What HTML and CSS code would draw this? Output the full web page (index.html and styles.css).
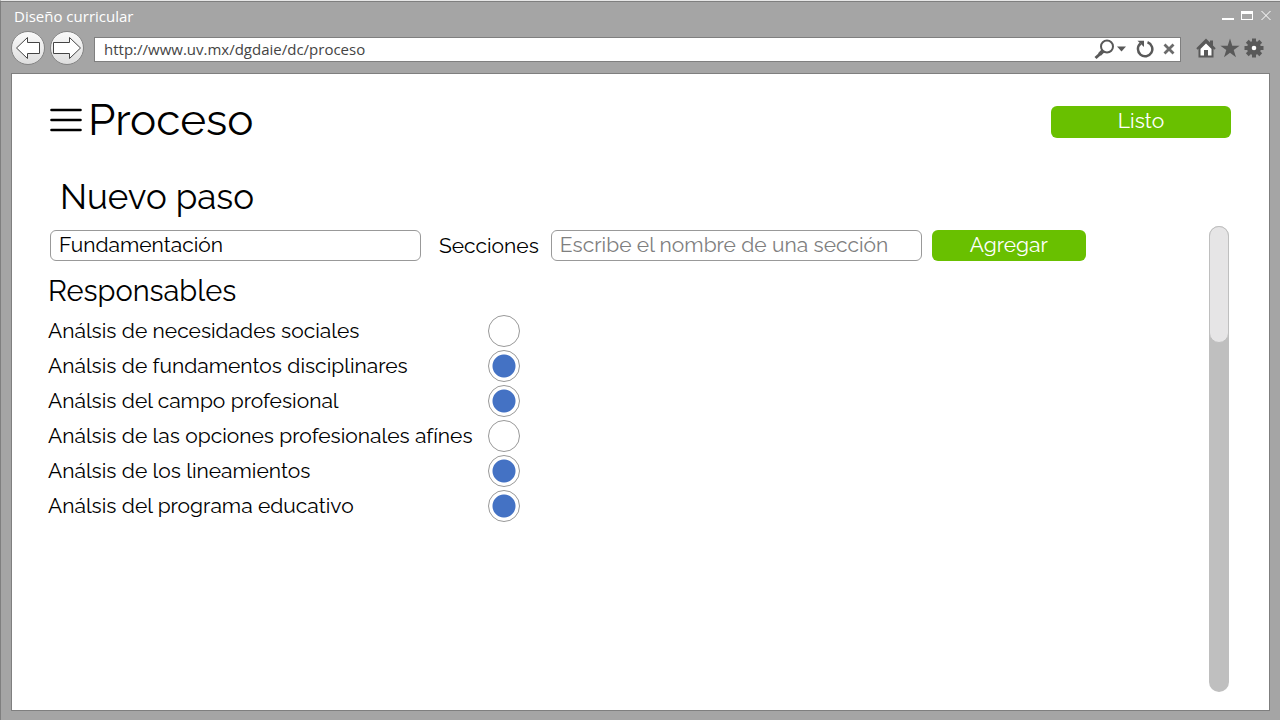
FILE: index.html
```html
<!DOCTYPE html>
<html lang="es">
<head>
<meta charset="utf-8">
<meta name="viewport" content="width=device-width, initial-scale=1">
<title>Diseño curricular</title>
<link rel="stylesheet" href="styles.css">
</head>
<body>
<div class="window">
  <header class="chrome">
    <div class="titlebar">
      <span class="window-title">Diseño curricular</span>
      <div class="window-controls">
        <button class="icon-button" type="button" aria-label="Minimizar"><svg width="12" height="12" viewBox="0 0 12 12"><path d="M0 8h12v2H0z" fill="#fff"/></svg></button>
        <button class="icon-button" type="button" aria-label="Maximizar"><svg width="12" height="12" viewBox="0 0 12 12"><path d="M0 1h12v9H0zM1 4v5h10V4z" fill="#fff" fill-rule="evenodd"/></svg></button>
        <button class="icon-button" type="button" aria-label="Cerrar"><svg width="12" height="12" viewBox="0 0 12 12"><path d="M1.500 1l9 9M10.500 1l-9 9" stroke="#fff" stroke-width="1"/></svg></button>
      </div>
    </div>
    <div class="toolbar">
      <button class="nav-button" type="button" aria-label="Atrás"><svg width="26" height="24" viewBox="0 0 26 24"><path d="M1.500 12L12.500 1.500V6.500H24.500V17.500H12.500V22.500Z" fill="#fff" stroke="#444"/></svg></button>
      <button class="nav-button" type="button" aria-label="Adelante"><svg width="30" height="24" viewBox="0 0 30 24"><path d="M28.500 12L17.500 1.500V6.500H1.500V17.500H17.500V22.500Z" fill="#fff" stroke="#444"/></svg></button>
      <div class="address">
        <input class="address-input" type="text" aria-label="Dirección" value="http://www.uv.mx/dgdaie/dc/proceso">
        <button class="icon-button" type="button" aria-label="Buscar"><svg width="34" height="22" viewBox="0 0 34 22"><circle cx="13" cy="8.500" r="6" fill="none" stroke="#595959" stroke-width="2"/><path d="M9 12.800L5.500 16.500" stroke="#595959" stroke-width="4"/><path d="M6 16L1.500 20" stroke="#595959" stroke-width="3"/><path d="M23 8.500h9l-4.500 5z" fill="#595959"/></svg></button>
        <button class="icon-button reload" type="button" aria-label="Recargar"><svg width="18" height="20" viewBox="0 0 18 20"><path d="M11.500 3.300A7.200 7.200 0 1 1 4.600 4.500" fill="none" stroke="#595959" stroke-width="2.500"/><path d="M1.500 1.800H8V8z" fill="#595959"/></svg></button>
        <button class="icon-button stop" type="button" aria-label="Detener"><svg width="12" height="12" viewBox="0 0 12 12"><path d="M1.500 1.500l9 9M10.500 1.500l-9 9" stroke="#6b6b6b" stroke-width="2.800"/></svg></button>
      </div>
      <div class="tools">
        <button class="icon-button" type="button" aria-label="Inicio"><svg width="20" height="20" viewBox="0 0 20 20"><path d="M3.500 10.500V18.500H16.500V10.500L10 4z" fill="#fff" stroke="#595959" stroke-width="2"/><path d="M1 11l9-9 9 9" fill="none" stroke="#595959" stroke-width="2"/><path d="M14 2.500h3V8l-3-2z" fill="#595959"/><path d="M8 18v-6h4v6z" fill="#595959"/></svg></button>
        <button class="icon-button" type="button" aria-label="Favoritos"><svg width="20" height="20" viewBox="0 0 20 20"><path d="M10 .5l2.300 7.200h7.300l-5.900 4.300 2.300 7.200-6-4.500-6 4.500 2.300-7.200L.4 7.700h7.300z" fill="#595959"/></svg></button>
        <button class="icon-button" type="button" aria-label="Configuración"><svg width="20" height="20" viewBox="0 0 20 20"><g fill="#595959"><circle cx="10" cy="10" r="7"/><path d="M8 .5h4v19H8z"/><path d="M8 .5h4v19H8z" transform="rotate(45 10 10)"/><path d="M8 .5h4v19H8z" transform="rotate(90 10 10)"/><path d="M8 .5h4v19H8z" transform="rotate(135 10 10)"/></g><circle cx="10" cy="10" r="2.300" fill="#fff"/></svg></button>
      </div>
    </div>
  </header>
  <main class="page">
    <div class="page-header">
      <button class="icon-button" type="button" aria-label="Menú"><svg width="32" height="24" viewBox="0 0 32 24"><path d="M1.500 2h29M1.500 12h29M1.500 22h29" stroke="#000" stroke-width="2.600" stroke-linecap="round"/></svg></button>
      <h1 class="page-title">Proceso</h1>
      <button class="action done" type="button">Listo</button>
    </div>
    <h2 class="step-title">Nuevo paso</h2>
    <div class="workspace">
      <form class="step-form">
        <div class="fields">
          <input class="field" type="text" aria-label="Nombre del paso" value="Fundamentación">
          <label class="field-label" for="section">Secciones</label>
          <input class="field" id="section" type="text" placeholder="Escribe el nombre de una sección">
          <button class="action add" type="button">Agregar</button>
        </div>
        <fieldset class="owners">
          <legend class="owners-title">Responsables</legend>
          <div class="owner"><label for="o1">Análsis de necesidades sociales</label><input class="dot" id="o1" type="checkbox"></div>
          <div class="owner"><label for="o2">Análsis de fundamentos disciplinares</label><input class="dot" id="o2" type="checkbox" checked></div>
          <div class="owner"><label for="o3">Análsis del campo profesional</label><input class="dot" id="o3" type="checkbox" checked></div>
          <div class="owner"><label for="o4">Análsis de las opciones profesionales afínes</label><input class="dot" id="o4" type="checkbox"></div>
          <div class="owner"><label for="o5">Análsis de los lineamientos</label><input class="dot" id="o5" type="checkbox" checked></div>
          <div class="owner"><label for="o6">Análsis del programa educativo</label><input class="dot" id="o6" type="checkbox" checked></div>
        </fieldset>
      </form>
      <div class="scroll-track"><div class="scroll-thumb"></div></div>
    </div>
  </main>
</div>
</body>
</html>
```
FILE: styles.css
```css
* { box-sizing: border-box; }
body { margin: 0; background: #fff; color: #000; font-family: Raleway, Lato, sans-serif; font-weight: 400; }
button, input { font: inherit; color: inherit; }
button { cursor: pointer; }
svg { display: block; }
.window { display: flex; flex-direction: column; min-height: 100vh; padding: 0 10px 9px 10px; background: #a5a5a5; border-top: 1px solid #e8e8e8; border-left: 1px solid #7f7f7f; }
.chrome { font-family: "Segoe UI", "Open Sans", sans-serif; margin: 0 -10px; padding: 0 10px; border-top: 1px solid #7f7f7f; }
.titlebar { display: flex; align-items: center; justify-content: space-between; height: 28px; padding: 0 0 0 3px; }
.window-title { color: #fff; font-size: 15px; }
.window-controls { display: flex; gap: 7px; margin-right: -2px; }
.icon-button { flex: none; padding: 0; border: 0; background: none; }
.toolbar { display: flex; align-items: center; height: 36px; margin-bottom: 7px; }
.nav-button { display: grid; place-items: center; flex: none; width: 34px; height: 34px; margin-right: 5px; padding: 0; border: 1px solid #858585; border-radius: 50%; background: linear-gradient(#fafafa, #dedede); }
.address { display: flex; align-items: center; flex: 1; height: 25px; margin: 2px 15px 0 5px; padding: 0 5px 0 9px; background: #fff; border: 1px solid #7f7f7f; }
.address-input { flex: 1; min-width: 0; padding: 0; border: 0; outline: 0; color: #444; font-size: 15px; background: none; }
.reload { margin-left: 8px; }
.stop { margin-left: 9px; }
.tools { display: flex; gap: 4px; margin-right: 6px; }
.page { display: flex; flex: 1; flex-direction: column; padding: 24px 38px 18px 36px; background: #fff; border: 1px solid #7f7f7f; }
.page-header { display: flex; align-items: center; height: 44px; padding-left: 2px; }
.page-title { flex: 1; margin: 0 0 0 6px; font-size: 44px; line-height: 44px; font-weight: 400; }
.action { flex: none; height: 31px; padding: 0 0 2px; border: 0; border-radius: 6px; background: #69c000; color: #fff; font-size: 21px; line-height: 28px; font-weight: 400; }
.done { width: 180px; height: 32px; margin-top: 4px; }
.step-title { margin: 32px 0 6px 12px; font-size: 35px; line-height: 46px; font-weight: 400; }
.workspace { display: flex; flex: 1; justify-content: space-between; gap: 24px; padding-right: 2px; }
.step-form { flex: 1; min-width: 0; padding-top: 4px; }
.fields { display: flex; align-items: center; height: 31px; padding-left: 2px; }
.field { flex: 0 1 371px; min-width: 0; height: 31px; padding: 0 8px 2px; border: 1px solid #999; border-radius: 6px; background: #fff; font-size: 21px; }
.field::placeholder { color: #7f7f7f; opacity: 1; }
.field-label { margin: 0 12px 0 18px; font-size: 21px; line-height: 30px; }
.add { width: 154px; margin-left: 10px; }
.owners { display: inline-grid; gap: 3px; margin: 0; padding: 12px 0 0; border: 0; }
.owners-title { float: left; margin: 0 0 3px; padding: 0; font-size: 29px; line-height: 36px; font-weight: 400; }
.owner { display: flex; align-items: center; justify-content: space-between; gap: 15px; height: 32px; font-size: 21px; line-height: 28px; }
.owner label { padding-bottom: 1px; }
.dot { appearance: none; flex: none; width: 32px; height: 32px; margin: 0; border: 1px solid #999; border-radius: 50%; background: #fff; }
.dot:checked { background: radial-gradient(circle, #4472c4 11px, #fff 12px); }
.scroll-track { flex: none; width: 20px; border-radius: 10px; background: #bfbfbf; }
.scroll-thumb { height: 25%; border: 1px solid #bfbfbf; border-radius: 10px; background: #e6e5e6; }
```
